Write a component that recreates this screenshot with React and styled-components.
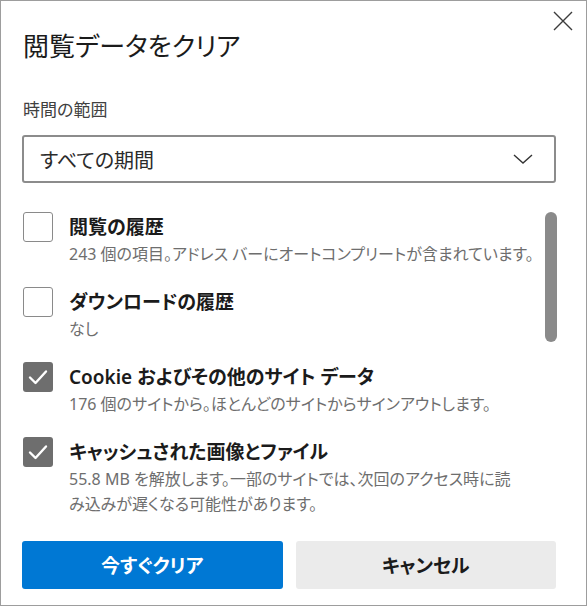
import React from 'react'
import styled, { createGlobalStyle } from 'styled-components'

const GlobalStyle = createGlobalStyle`
  html, body {
    margin: 0;
    padding: 0;
    background: #ffffff;
  }
  body {
    font-family: "Noto Sans", "Noto Sans CJK JP", sans-serif;
    font-feature-settings: "palt";
  }
`

const items = [
  {
    key: 'history',
    label: '閲覧の履歴',
    lines: ['243 個の項目。アドレス バーにオートコンプリートが含まれています。'],
    checked: false,
  },
  {
    key: 'downloads',
    label: 'ダウンロードの履歴',
    lines: ['なし'],
    checked: false,
  },
  {
    key: 'cookies',
    label: 'Cookie およびその他のサイト データ',
    lines: ['176 個のサイトから。ほとんどのサイトからサインアウトします。'],
    checked: true,
  },
  {
    key: 'cache',
    label: 'キャッシュされた画像とファイル',
    lines: [
      '55.8 MB を解放します。一部のサイトでは、次回のアクセス時に読',
      'み込みが遅くなる可能性があります。',
    ],
    checked: true,
  },
]

const App = () => {
  return (
    <>
      <GlobalStyle />
      <Dialog>
        <Header>
          <Title>閲覧データをクリア</Title>
          <CloseButton aria-label="閉じる">
            <svg width="20" height="20" viewBox="0 0 20 20">
              <path d="M1 1 L19 19 M19 1 L1 19" stroke="#3c3c3c" strokeWidth="1.4" fill="none" />
            </svg>
          </CloseButton>
        </Header>

        <RangeLabel>時間の範囲</RangeLabel>
        <Select>
          <span>すべての期間</span>
          <svg width="20" height="10" viewBox="0 0 20 10">
            <polyline points="1,1 10,9 19,1" stroke="#333333" strokeWidth="1.4" fill="none" />
          </svg>
        </Select>

        <List>
          <Items>
            {items.map((item) => (
              <Item key={item.key}>
                <Checkbox $checked={item.checked}>
                  {item.checked && (
                    <svg width="20" height="16" viewBox="0 0 20 16">
                      <polyline
                        points="2,8.5 7.5,14 18,2.5"
                        stroke="#ffffff"
                        strokeWidth="2.4"
                        fill="none"
                        strokeLinecap="round"
                        strokeLinejoin="round"
                      />
                    </svg>
                  )}
                </Checkbox>
                <ItemText>
                  <ItemLabel>{item.label}</ItemLabel>
                  {item.lines.map((line) => (
                    <ItemDesc key={line}>{line}</ItemDesc>
                  ))}
                </ItemText>
              </Item>
            ))}
          </Items>
          <ScrollTrack>
            <ScrollThumb />
          </ScrollTrack>
        </List>

        <Buttons>
          <Button $primary>今すぐクリア</Button>
          <Button>キャンセル</Button>
        </Buttons>
      </Dialog>
    </>
  )
}

const Dialog = styled.div`
  width: 587px;
  height: 606px;
  box-sizing: border-box;
  border: 1px solid #9d9d9d;
  padding: 10px 30px 0 21px;
  display: flex;
  flex-direction: column;
  background: #ffffff;
  overflow: hidden;
`

const Header = styled.div`
  display: flex;
  justify-content: space-between;
  align-items: flex-start;
`

const Title = styled.h1`
  margin: 15px 0 0 1px;
  font-size: 26px;
  font-weight: 400;
  line-height: 40px;
  color: #1b1b1b;
`

const CloseButton = styled.button`
  width: 20px;
  height: 20px;
  margin-right: -17px;
  padding: 0;
  border: none;
  background: transparent;
  display: flex;
  cursor: pointer;
`

const RangeLabel = styled.div`
  margin-top: 32px;
  font-size: 17px;
  line-height: 24px;
  color: #404040;
  padding-left: 1px;
`

const Select = styled.div`
  margin-top: 13px;
  height: 48px;
  box-sizing: border-box;
  border: 2px solid #8c8c8c;
  border-radius: 3px;
  padding: 0 21px 0 16px;
  display: flex;
  align-items: center;
  justify-content: space-between;
  font-size: 20px;
  color: #2b2b2b;
`

const List = styled.div`
  margin-top: 29px;
  display: flex;
  align-items: flex-start;
`

const Items = styled.div`
  flex: 1;
  display: flex;
  flex-direction: column;
  gap: 20px;
`

const Item = styled.div`
  display: flex;
  align-items: flex-start;
  gap: 16px;
  padding-left: 1px;
`

const Checkbox = styled.div`
  width: 30px;
  height: 30px;
  flex: none;
  box-sizing: border-box;
  border-radius: 3px;
  border: ${(p) => (p.$checked ? 'none' : '1.5px solid #8a8a8a')};
  background: ${(p) => (p.$checked ? '#6e6e6e' : '#ffffff')};
  display: flex;
  align-items: center;
  justify-content: center;
`

const ItemText = styled.div`
  display: flex;
  flex-direction: column;
`

const ItemLabel = styled.div`
  font-size: 19px;
  font-weight: 600;
  line-height: 30px;
  color: #1b1b1b;
  white-space: nowrap;
`

const ItemDesc = styled.div`
  font-size: 16px;
  line-height: 25px;
  color: #6e6e6e;
  white-space: nowrap;
`

const ScrollTrack = styled.div`
  width: 12px;
  margin-right: -1px;
  display: flex;
  flex-direction: column;
`

const ScrollThumb = styled.div`
  height: 130px;
  border-radius: 6px;
  background: #8a8a8a;
`

const Buttons = styled.div`
  margin-top: 24px;
  display: grid;
  grid-template-columns: 1fr 1fr;
  gap: 13px;
`

const Button = styled.button`
  height: 48px;
  border: none;
  border-radius: 3px;
  font-family: inherit;
  font-feature-settings: "palt";
  font-size: 19px;
  font-weight: 600;
  background: ${(p) => (p.$primary ? '#0078d4' : '#ebebeb')};
  color: ${(p) => (p.$primary ? '#ffffff' : '#1b1b1b')};
  cursor: pointer;
`

export default App
